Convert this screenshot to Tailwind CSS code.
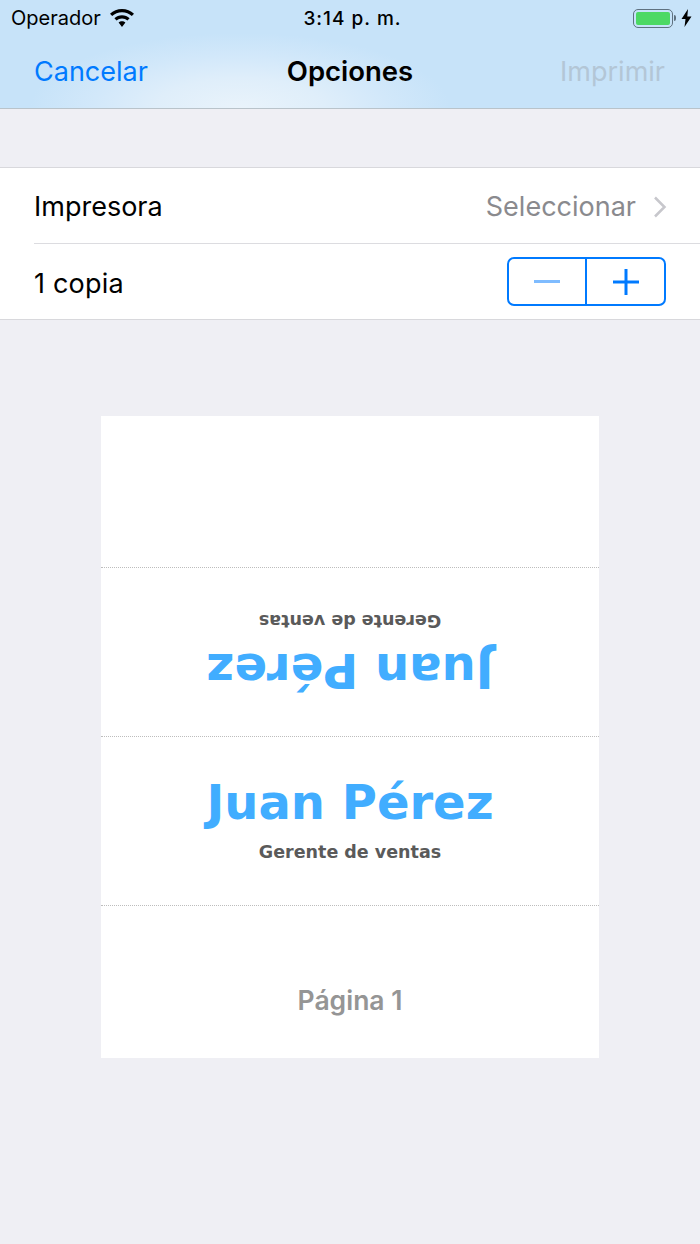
<!DOCTYPE html>
<html lang="es">
<head>
  <meta charset="UTF-8" />
  <title>Opciones</title>
  <script src="https://cdn.jsdelivr.net/npm/@tailwindcss/browser@4"></script>
</head>
<body class="bg-[#efeff4] font-['Inter','Liberation_Sans',sans-serif]">
  <div class="w-[700px] h-[1244px] overflow-hidden flex flex-col">

    <!-- barra superior -->
    <header class="h-[109px] shrink-0 border-b border-[#b9c3ca] bg-[radial-gradient(ellipse_210px_75px_at_240px_108px,#e9f3fb_0%,#dfeefa_40%,#d2e8fa_70%,#c7e3f9_100%)]">
      <div class="h-[36px] flex items-center justify-between pl-[11px] pr-[8px] text-black">
        <div class="w-[240px] flex items-center gap-[9px]">
          <span class="text-[20px] leading-none">Operador</span>
          <svg width="24" height="18" viewBox="0 0 24 18" fill="#000">
            <path d="M12 0c4.600 0 8.800 1.800 12 4.800l-2.200 2.300C19.200 4.700 15.800 3.200 12 3.200S4.800 4.700 2.200 7.100L0 4.800C3.200 1.800 7.400 0 12 0z"/>
            <path d="M12 6.200c2.900 0 5.600 1.100 7.600 3l-2.200 2.300c-1.400-1.300-3.300-2.100-5.400-2.100s-4 .8-5.400 2.100L4.400 9.200c2-1.900 4.700-3 7.600-3z"/>
            <path d="M12 12.200c1.300 0 2.500.5 3.400 1.400L12 18l-3.400-4.400c.9-.9 2.100-1.400 3.400-1.400z"/>
          </svg>
        </div>
        <span class="pl-[2px] text-[19px] leading-none font-medium tracking-[1px]">3:14 p. m.</span>
        <div class="w-[240px] flex items-center justify-end gap-[5px]">
          <div class="flex items-center gap-px">
            <div class="w-[40px] h-[19px] rounded-[5px] border-[1.500px] border-[#5f7180] p-[2px]">
              <div class="w-full h-full rounded-[2px] bg-[#4cd964]"></div>
            </div>
            <div class="w-[2px] h-[6px] rounded-r-sm bg-[#5f7180]"></div>
          </div>
          <svg width="11" height="18" viewBox="0 0 11 18" fill="#000">
            <path d="M7 0 .5 10h4L3.500 18l7-10.500H6.300z"/>
          </svg>
        </div>
      </div>
      <div class="h-[72px] relative flex items-center justify-between pl-[34px] pr-[35px] pb-[1px] text-[27px] leading-none">
        <span class="text-[#007aff]">Cancelar</span>
        <span class="absolute left-0 right-0 text-center text-[27.500px] font-semibold text-black">Opciones</span>
        <span class="text-[#b3c6d6]">Imprimir</span>
      </div>
    </header>

    <!-- impresora y copias -->
    <section class="mt-[58px] bg-white border-y border-[#d8d8dc]">
      <div class="h-[76px] ml-[34px] pr-[33px] flex items-center justify-between border-b border-[#dcdce0] text-[27px] leading-none">
        <span class="pt-[2px] text-black">Impresora</span>
        <div class="flex items-center gap-[17px] pt-[2px]">
          <span class="text-[#8a8a8e]">Seleccionar</span>
          <svg width="14" height="22" viewBox="0 0 14 22" fill="none" stroke="#c7c7cc" stroke-width="2.500">
            <path d="M2 1.500 11.500 11 2 20.500"/>
          </svg>
        </div>
      </div>
      <div class="h-[75px] ml-[34px] pr-[34px] flex items-center justify-between text-[27px] leading-none">
        <span class="pt-[3px] tracking-[0.2px] text-black">1 copia</span>
        <div class="w-[159px] h-[49px] flex rounded-[7px] border-2 border-[#007aff]">
          <div class="w-[78px] flex items-center justify-center border-r-2 border-[#007aff]">
            <div class="w-[26px] h-[3px] bg-[#7fbcff]"></div>
          </div>
          <div class="flex-1 flex items-center justify-center">
            <svg width="26" height="26" viewBox="0 0 26 26" fill="#007aff">
              <path d="M0 11.500h26v3H0z"/>
              <path d="M11.500 0h3v26h-3z"/>
            </svg>
          </div>
        </div>
      </div>
    </section>

    <!-- vista previa de la página -->
    <main class="mt-[96px] mx-auto w-[498px] h-[642px] bg-white flex flex-col">
      <div class="h-[152px] shrink-0 border-b border-dotted border-[#bdbdbd]"></div>
      <div class="h-[169px] shrink-0 border-b border-dotted border-[#bdbdbd] font-['DejaVu_Sans',sans-serif] font-bold">
        <div class="h-full flex flex-col items-center pt-[38px] rotate-180">
          <p class="text-[48px] leading-[54px] text-[#41adff]">Juan Pérez</p>
          <p class="mt-[13px] text-[17.500px] leading-[20px] text-[#5a5a5a]">Gerente de ventas</p>
        </div>
      </div>
      <div class="h-[169px] shrink-0 border-b border-dotted border-[#bdbdbd] font-['DejaVu_Sans',sans-serif] font-bold">
        <div class="h-full flex flex-col items-center pt-[38px]">
          <p class="text-[48px] leading-[54px] text-[#41adff]">Juan Pérez</p>
          <p class="mt-[13px] text-[17.500px] leading-[20px] text-[#5a5a5a]">Gerente de ventas</p>
        </div>
      </div>
      <div class="flex-1 flex items-center justify-center pt-[36px]">
        <span class="text-[26.500px] leading-none font-semibold text-[#959595]">Página 1</span>
      </div>
    </main>
  </div>
</body>
</html>
